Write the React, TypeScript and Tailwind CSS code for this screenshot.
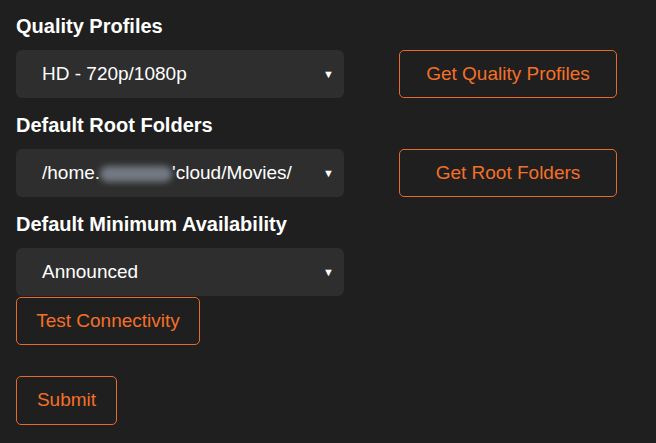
const orange = 'border border-[#e8692a] text-[#f47029] rounded-[5px] bg-transparent'

function Select({ children }: { children: React.ReactNode }) {
  return (
    <div className="w-[328px] h-[48px] rounded-[6px] bg-[#2e2e2e] flex items-center pl-[26px] pr-[10px] text-[19px] text-white">
      <div className="flex-1 whitespace-nowrap overflow-hidden">{children}</div>
      <span className="text-[11px] leading-none">▼</span>
    </div>
  )
}

function Label({ text, first }: { text: string; first?: boolean }) {
  return (
    <div
      className={`${first ? 'h-[50px] pt-[2px]' : 'h-[51px] pt-[3px]'} flex items-center text-[20px] font-bold text-white`}
    >
      {text}
    </div>
  )
}

export default function App() {
  return (
    <div className="w-[656px] h-[443px] bg-[#1f1f1f] pl-[16px] font-['Liberation_Sans',Arial,sans-serif]">
      <Label text="Quality Profiles" first />
      <div className="flex">
        <Select>HD - 720p/1080p</Select>
        <button type="button" className={`${orange} ml-[55px] w-[218px] h-[48px] text-[19px]`}>
          Get Quality Profiles
        </button>
      </div>
      <Label text="Default Root Folders" />
      <div className="flex">
        <Select>
          /home.
          <span className="inline-block w-[72px] h-[16px] align-middle bg-[#737982] blur-[3px] rounded-full" />
          'cloud/Movies/
        </Select>
        <button type="button" className={`${orange} ml-[55px] w-[218px] h-[48px] text-[19px]`}>
          Get Root Folders
        </button>
      </div>
      <Label text="Default Minimum Availability" />
      <Select>Announced</Select>
      <button type="button" className={`${orange} mt-[1px] w-[184px] h-[48px] text-[19px]`}>
        Test Connectivity
      </button>
      <div className="pt-[31px]">
        <button type="button" className={`${orange} w-[101px] h-[49px] text-[19px]`}>
          Submit
        </button>
      </div>
    </div>
  )
}
